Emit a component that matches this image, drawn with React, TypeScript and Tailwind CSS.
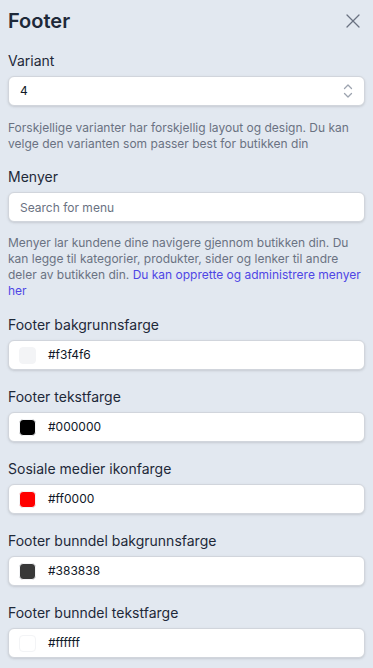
import { X } from 'lucide-react'

const colors = [
  { label: 'Footer bakgrunnsfarge', value: '#f3f4f6' },
  { label: 'Footer tekstfarge', value: '#000000' },
  { label: 'Sosiale medier ikonfarge', value: '#ff0000' },
  { label: 'Footer bunndel bakgrunnsfarge', value: '#383838' },
  { label: 'Footer bunndel tekstfarge', value: '#ffffff' },
]

function UpDown() {
  return (
    <svg width="10" height="16" viewBox="0 0 10 16" fill="none" stroke="#9ca3af" strokeWidth="1.3" strokeLinecap="round" strokeLinejoin="round">
      <path d="M1.5 5.5L5 2l3.5 3.5" />
      <path d="M1.5 10.5L5 14l3.5-3.5" />
    </svg>
  )
}

export default function App() {
  return (
    <div className="min-h-screen bg-[#e2e8f0] px-2 text-gray-800" style={{ fontFamily: 'Inter, "Noto Sans", sans-serif' }}>
      <div className="flex items-center justify-between h-[42px]">
        <h2 className="text-xl font-semibold text-gray-800">Footer</h2>
        <button className="text-gray-500">
          <X size={24} strokeWidth={1.3} />
        </button>
      </div>

      <div className="mt-[9px]">
        <label className="block text-sm leading-5 mb-[5px]">Variant</label>
        <div className="h-[30px] bg-white rounded-md border border-gray-300 shadow-sm flex items-center justify-between pl-[11px] pr-[11px] text-xs text-gray-900">
          <span>4</span>
          <UpDown />
        </div>
        <p className="mt-[14px] text-xs leading-[15.5px] text-gray-500">
          Forskjellige varianter har forskjellig layout og design. Du kan velge den varianten som passer best for butikken din
        </p>
      </div>

      <div className="mt-4">
        <label className="block text-sm leading-5 mb-[5px]">Menyer</label>
        <input
          className="w-full h-[30px] bg-white rounded-md border border-gray-300 shadow-sm px-[11px] text-xs text-gray-900 placeholder:text-gray-500 outline-none"
          placeholder="Search for menu"
        />
        <p className="mt-[13px] text-xs leading-4 text-gray-500">
          Menyer lar kundene dine navigere gjennom butikken din. Du kan legge til kategorier, produkter, sider og lenker til andre deler av butikken din.{' '}
          <a className="text-[#4f46e5]">Du kan opprette og administrere menyer her</a>
        </p>
      </div>

      <div className="mt-4 flex flex-col gap-[17px]">
        {colors.map((c) => (
          <div key={c.label}>
            <label className="block text-sm leading-5 mb-[5px]">{c.label}</label>
            <div className="h-[30px] bg-white rounded-md border border-gray-300 shadow-sm flex items-center pl-[10px] gap-[12px] text-xs text-gray-900">
              <span className="w-[17px] h-[17px] rounded-[4px] border border-gray-100" style={{ backgroundColor: c.value }} />
              <span>{c.value}</span>
            </div>
          </div>
        ))}
      </div>
    </div>
  )
}
